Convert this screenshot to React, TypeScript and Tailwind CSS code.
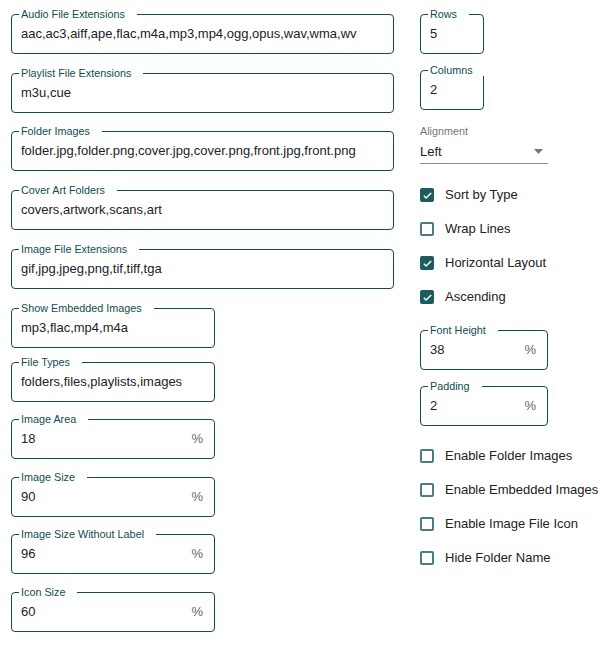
import React from "react";

interface FieldProps {
  label: string;
  value: string;
  width: string; // tailwind width class
  mt: string; // tailwind margin-top class
  unit?: string;
}

const Field: React.FC<FieldProps> = ({ label, value, width, mt, unit }) => {
  return (
    <div
      className={`relative ${width} ${mt} h-[40px] rounded-[4px] border border-[#114c4e] flex items-center pl-[9px] pr-[11px]`}
    >
      <span className="absolute left-[7px] -top-[7px] bg-white pl-[2px] pr-[12px] text-[10.8px] leading-[12px] text-[#114c4e]">
        {label}
      </span>
      <span className="flex-1 text-[13px] text-[#222]">{value}</span>
      {unit && <span className="text-[13px] text-[#666]">{unit}</span>}
    </div>
  );
};

const Check: React.FC<{ label: string; checked?: boolean }> = ({ label, checked }) => {
  return (
    <div className="h-[34px] flex items-center gap-[11px]">
      {checked ? (
        <span className="w-[14px] h-[14px] rounded-[2px] bg-[#1e5b61] flex items-center justify-center">
          <svg width="11" height="11" viewBox="0 0 24 24" fill="none">
            <path d="M4 12.5l5 5L20 6.5" stroke="white" strokeWidth="3.2" />
          </svg>
        </span>
      ) : (
        <span className="w-[14px] h-[14px] rounded-[2px] border-2 border-[#4b7d84]" />
      )}
      <span className="text-[13px] text-[#222]">{label}</span>
    </div>
  );
};

export default function App() {
  return (
    <div className="w-[610px] h-[647px] bg-white flex font-['Liberation_Sans',Arial,sans-serif]">
      <div className="flex flex-col pl-[11px] w-[420px]">
        <Field label="Audio File Extensions" value="aac,ac3,aiff,ape,flac,m4a,mp3,mp4,ogg,opus,wav,wma,wv" width="w-[383px]" mt="mt-[14px]" />
        <Field label="Playlist File Extensions" value="m3u,cue" width="w-[383px]" mt="mt-[19px]" />
        <Field label="Folder Images" value="folder.jpg,folder.png,cover.jpg,cover.png,front.jpg,front.png" width="w-[383px]" mt="mt-[18px]" />
        <Field label="Cover Art Folders" value="covers,artwork,scans,art" width="w-[383px]" mt="mt-[19px]" />
        <Field label="Image File Extensions" value="gif,jpg,jpeg,png,tif,tiff,tga" width="w-[383px]" mt="mt-[19px]" />
        <Field label="Show Embedded Images" value="mp3,flac,mp4,m4a" width="w-[204px]" mt="mt-[19px]" />
        <Field label="File Types" value="folders,files,playlists,images" width="w-[204px]" mt="mt-[14px]" />
        <Field label="Image Area" value="18" unit="%" width="w-[204px]" mt="mt-[17px]" />
        <Field label="Image Size" value="90" unit="%" width="w-[204px]" mt="mt-[18px]" />
        <Field label="Image Size Without Label" value="96" unit="%" width="w-[204px]" mt="mt-[17px]" />
        <Field label="Icon Size" value="60" unit="%" width="w-[204px]" mt="mt-[18px]" />
      </div>
      <div className="flex flex-col w-[190px]">
        <Field label="Rows" value="5" width="w-[64px]" mt="mt-[14px]" />
        <Field label="Columns" value="2" width="w-[64px]" mt="mt-[16px]" />
        <div className="mt-[14px] w-[128px]">
          <div className="text-[10.8px] leading-[14px] text-[#777]">Alignment</div>
          <div className="h-[24px] mt-[2px] border-b border-[#8a8a8a] flex items-center justify-between pr-[5px]">
            <span className="text-[13px] text-[#222]">Left</span>
            <svg width="9" height="5" viewBox="0 0 9 5">
              <path d="M0 0h9L4.5 5z" fill="#777" />
            </svg>
          </div>
        </div>
        <div className="mt-[14px]">
          <Check label="Sort by Type" checked />
          <Check label="Wrap Lines" />
          <Check label="Horizontal Layout" checked />
          <Check label="Ascending" checked />
        </div>
        <Field label="Font Height" value="38" unit="%" width="w-[128px]" mt="mt-[16px]" />
        <Field label="Padding" value="2" unit="%" width="w-[128px]" mt="mt-[16px]" />
        <div className="mt-[13px]">
          <Check label="Enable Folder Images" />
          <Check label="Enable Embedded Images" />
          <Check label="Enable Image File Icon" />
          <Check label="Hide Folder Name" />
        </div>
      </div>
    </div>
  );
}
